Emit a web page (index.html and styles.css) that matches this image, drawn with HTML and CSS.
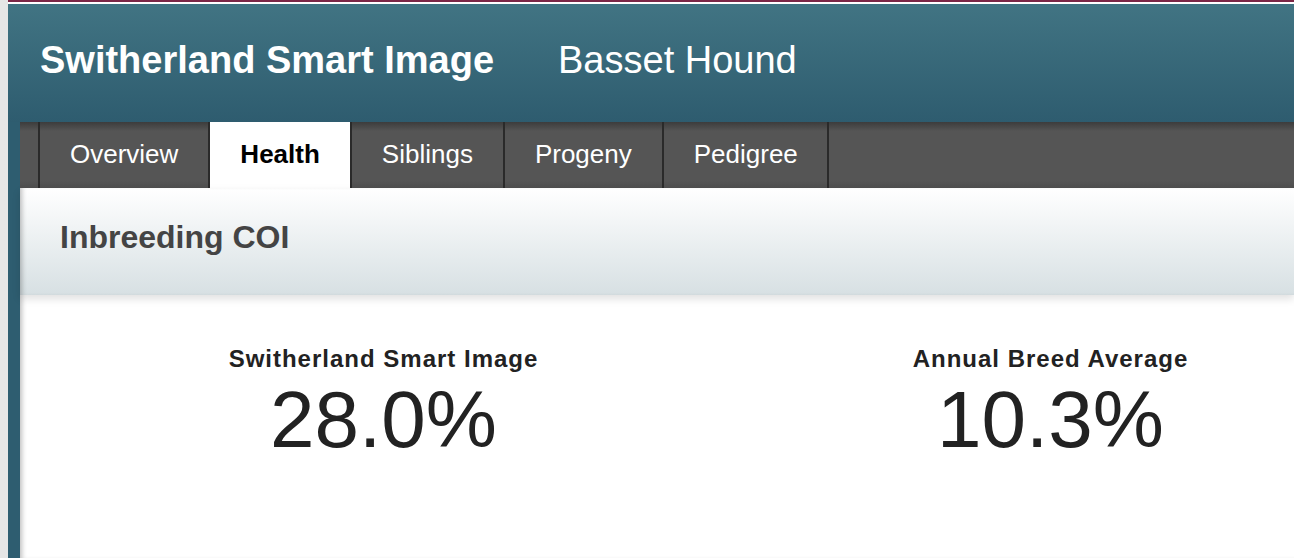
FILE: index.html
```html
<!DOCTYPE html>
<html>
<head>
<meta charset="utf-8">
<link rel="stylesheet" href="styles.css">
</head>
<body>
<div class="frame">
  <div class="topline"></div>
  <div class="shell">
    <header class="header">
      <h1 class="title">Switherland Smart Image</h1>
      <span class="breed">Basset Hound</span>
    </header>
    <div class="content">
      <nav class="tabs">
        <a class="tab">Overview</a>
        <a class="tab active">Health</a>
        <a class="tab">Siblings</a>
        <a class="tab">Progeny</a>
        <a class="tab last">Pedigree</a>
      </nav>
      <div class="section-head">Inbreeding COI</div>
      <div class="stats">
        <div class="stat">
          <div class="stat-label">Switherland Smart Image</div>
          <div class="stat-value">28.0%</div>
        </div>
        <div class="stat">
          <div class="stat-label">Annual Breed Average</div>
          <div class="stat-value">10.3%</div>
        </div>
      </div>
    </div>
  </div>
</div>
</body>
</html>
```
FILE: styles.css
```css
html, body {
  margin: 0;
  padding: 0;
  height: 100%;
  overflow: hidden;
}
body {
  background: linear-gradient(to right, #e6e6e6, #d6d6d6);
  font-family: "Liberation Sans", Arial, Helvetica, sans-serif;
}
.frame {
  margin-left: 8px;
  height: 100%;
  display: flex;
  flex-direction: column;
}
.topline {
  height: 2px;
  background: #7c2646;
  border-bottom: 2px solid #ffffff;
  flex: none;
}
.shell {
  flex: 1;
  background: #2e5d70;
  display: flex;
  flex-direction: column;
}
.header {
  height: 118px;
  background: linear-gradient(to bottom, #417483, #2e5c6f);
  display: flex;
  align-items: center;
  padding-left: 32px;
  color: #ffffff;
  flex: none;
}
.title {
  margin: 0;
  font-size: 38px;
  font-weight: bold;
  line-height: 1;
  position: relative;
  top: -3px;
}
.breed {
  margin-left: 64px;
  font-size: 38px;
  line-height: 1;
  position: relative;
  top: -3px;
}
.content {
  flex: 1;
  margin-left: 12px;
  background: #ffffff;
  box-shadow: inset 5px 0 5px -3px rgba(0,0,0,0.25);
  display: flex;
  flex-direction: column;
}
.tabs {
  height: 66px;
  background: linear-gradient(to bottom, #3c3c3c 0px, #555555 9px, #555555 58px, #4e4e4e 66px);
  display: flex;
  padding-left: 18px;
  flex: none;
}
.tab {
  display: flex;
  align-items: center;
  padding: 0 30px 2px 30px;
  border-left: 2px solid #2a2a2a;
  color: #ffffff;
  font-size: 26px;
}
.tab.last {
  border-right: 2px solid #2a2a2a;
  padding-right: 29px;
}
.tab.active {
  background: #ffffff;
  color: #000000;
  font-weight: bold;
  padding: 0 30px 2px 30px;
}
.section-head {
  height: 107px;
  box-sizing: border-box;
  padding-bottom: 8px;
  background: linear-gradient(to bottom, #ffffff, #d7e0e3);
  box-shadow: 0 4px 8px rgba(0,0,0,0.12), inset 5px 0 5px -3px rgba(0,0,0,0.25);
  display: flex;
  align-items: center;
  padding-left: 40px;
  font-size: 32px;
  font-weight: bold;
  color: #444444;
  flex: none;
  position: relative;
}
.stats {
  display: grid;
  grid-template-columns: 667px 667px;
  padding-left: 30px;
  padding-top: 50px;
}
.stat {
  text-align: center;
  color: #222222;
}
.stat-label {
  font-size: 24px;
  font-weight: bold;
  letter-spacing: 1px;
  line-height: 28px;
}
.stat-value {
  font-size: 80px;
  line-height: 84px;
  margin-top: 5px;
}
```
